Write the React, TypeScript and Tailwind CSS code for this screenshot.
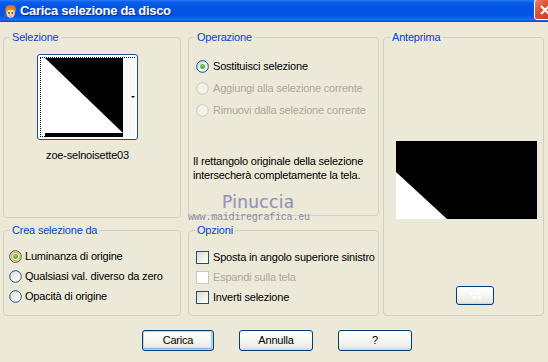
import React from "react";

function Radio({ checked = false, disabled = false, hover = false }: { checked?: boolean; disabled?: boolean; hover?: boolean }) {
  return (
    <svg width="13" height="13" viewBox="0 0 13 13" className="shrink-0">
      <defs>
        <linearGradient id="rgrad" x1="0" y1="0" x2="1" y2="1">
          <stop offset="0" stopColor="#D4D4CC" />
          <stop offset="0.6" stopColor="#F6F6F3" />
          <stop offset="1" stopColor="#FFFFFF" />
        </linearGradient>
        <radialGradient id="dgrad" cx="0.4" cy="0.35" r="0.7">
          <stop offset="0" stopColor="#7BE07B" />
          <stop offset="1" stopColor="#18A018" />
        </radialGradient>
      </defs>
      <circle
        cx="6.5"
        cy="6.5"
        r="5.8"
        fill={disabled ? "#F3F1E8" : "url(#rgrad)"}
        stroke={disabled ? "#CAC8BB" : "#1C5180"}
        strokeWidth="1"
      />
      {hover && <circle cx="6.5" cy="6.5" r="4.4" fill="none" stroke="#F6B23A" strokeWidth="1.6" />}
      {checked && <circle cx="6.5" cy="6.5" r="2.4" fill="url(#dgrad)" />}
    </svg>
  );
}

function Check({ disabled = false }: { disabled?: boolean }) {
  return (
    <svg width="13" height="13" viewBox="0 0 13 13" className="shrink-0">
      <defs>
        <linearGradient id="cgrad" x1="0" y1="0" x2="1" y2="1">
          <stop offset="0" stopColor="#D8D8D0" />
          <stop offset="0.6" stopColor="#F4F4F0" />
          <stop offset="1" stopColor="#FFFFFF" />
        </linearGradient>
      </defs>
      <rect
        x="0.5"
        y="0.5"
        width="12"
        height="12"
        fill={disabled ? "#FFFFFF" : "url(#cgrad)"}
        stroke={disabled ? "#CAC8BB" : "#1C5180"}
      />
    </svg>
  );
}

function Group({ title, className, children }: { title: string; className: string; children?: React.ReactNode }) {
  return (
    <fieldset className={`border border-[#D0D0BF] rounded-[4px] min-w-0 ${className}`}>
      <legend className="ml-[6px] px-[2px] text-[#0046D5] leading-[13px]">{title}</legend>
      {children}
    </fieldset>
  );
}

function XPButton({ children, def = false, className = "" }: { children?: React.ReactNode; def?: boolean; className?: string }) {
  return (
    <div
      className={`flex items-center justify-center rounded-[3px] border border-[#003C74] bg-[linear-gradient(to_bottom,#FFFFFF_0%,#F8F8F5_40%,#ECEBE6_85%,#D8D3C8_100%)] ${
        def ? "shadow-[inset_0_0_0_1px_#BCD4F6,inset_0_-2px_0_#89ADE4,inset_-1px_0_0_1px_#A7C3EE]" : ""
      } ${className}`}
    >
      {children}
    </div>
  );
}

function TitleIcon() {
  return (
    <svg width="16" height="16" viewBox="0 0 16 16" className="shrink-0">
      <path d="M3 5 Q4 1 9 1 Q14 1 14 6 L13 9 L11 6 L6 6 L4 9 Z" fill="#D9772B" />
      <ellipse cx="8.5" cy="9" rx="4.3" ry="4.8" fill="#F6D7B0" />
      <path d="M4 6 Q6 3 9 4 Q12 3 13 7 L12 7 Q10 5 8 6 Q6 5 5 8 Z" fill="#E5862F" />
      <circle cx="7" cy="9" r="0.9" fill="#2A6A2A" />
      <circle cx="10.3" cy="9" r="0.9" fill="#2A6A2A" />
      <path d="M7.5 11.8 Q8.6 12.6 9.7 11.8" stroke="#B0503A" strokeWidth="0.7" fill="none" />
      <path d="M2 8 L4 12 L3 14 Z" fill="#C0651E" />
    </svg>
  );
}

function Thumb() {
  return (
    <div className="w-[101px] h-[86px] rounded-[3px] border border-[#1F4E84] bg-white p-[2px]">
      <div className="w-full h-full border border-dotted border-black">
        <svg width="95" height="80" viewBox="0 0 95 80" className="block">
          <rect x="4" y="0" width="78" height="78" fill="#FFFFFF" />
          <polygon points="4,0 82,0 82,75" fill="#000000" />
          <rect x="4" y="75" width="78" height="4" fill="#000000" />
          <rect x="82" y="0" width="12" height="79" fill="#F7F7F7" />
          <polygon points="90,38 94,38 92,40" fill="#000000" />
        </svg>
      </div>
    </div>
  );
}

export default function App() {
  const dis = "text-[#ACA899]";
  return (
    <div className="relative w-[548px] h-[362px] overflow-hidden bg-[#ECE9D8] text-black text-[11px] leading-[13px] tracking-[-0.2px] whitespace-nowrap font-['Tahoma','Liberation_Sans',sans-serif]">
      {/* Title bar */}
      <div className="h-[22px] flex items-center bg-[linear-gradient(to_bottom,#2B7AF0_0%,#0A5CEB_10%,#0054E3_35%,#0053E2_70%,#0A62F2_82%,#1D6FF8_90%,#0043C9_100%)]">
        <div className="ml-[2px] mt-[1px]">
          <TitleIcon />
        </div>
        <div className="ml-[2px] text-white font-bold text-[13px] leading-[16px] font-['Trebuchet_MS','Liberation_Sans',sans-serif] [text-shadow:1px_1px_0_#0A2A8A] tracking-[-0.3px]">
          Carica selezione da disco
        </div>
        <div className="ml-auto mr-[-8px] self-start mt-[-1px] w-[22px] h-[21px] rounded-[3px] border border-white bg-[linear-gradient(135deg,#E8826A_0%,#D9512F_40%,#C43A1A_100%)] flex items-center justify-center">
          <svg width="12" height="12" viewBox="0 0 12 12">
            <path d="M2 2 L10 10 M10 2 L2 10" stroke="#FFFFFF" strokeWidth="2.2" />
          </svg>
        </div>
      </div>

      {/* Body */}
      <div className="flex pt-[9px] pl-[3px]">
        {/* left column */}
        <div className="w-[178px] flex flex-col gap-[6px]">
          <Group title="Selezione" className="h-[187px]">
            <div className="ml-[33px] mt-[10px] w-[101px] flex flex-col items-center">
              <Thumb />
              <div className="mt-[9px]">zoe-selnoisette03</div>
            </div>
          </Group>
          <Group title="Crea selezione da" className="h-[92px]">
            <div className="mt-[9px] pl-[5px] flex flex-col">
              <div className="h-[20px] flex items-center gap-[3px]">
                <Radio checked hover />
                <span>Luminanza di origine</span>
              </div>
              <div className="h-[20px] flex items-center gap-[3px]">
                <Radio />
                <span>Qualsiasi val. diverso da zero</span>
              </div>
              <div className="h-[20px] flex items-center gap-[3px]">
                <Radio />
                <span>Opacità di origine</span>
              </div>
            </div>
          </Group>
        </div>

        {/* middle column */}
        <div className="ml-[7px] w-[191px] flex flex-col gap-[8px]">
          <Group title="Operazione" className="h-[185px]">
            <div className="mt-[11px] pl-[7px] flex flex-col">
              <div className="h-[22px] flex items-center gap-[4px]">
                <Radio checked />
                <span>Sostituisci selezione</span>
              </div>
              <div className="h-[22px] flex items-center gap-[4px]">
                <Radio disabled />
                <span className={dis}>Aggiungi alla selezione corrente</span>
              </div>
              <div className="h-[22px] flex items-center gap-[4px]">
                <Radio disabled />
                <span className={dis}>Rimuovi dalla selezione corrente</span>
              </div>
            </div>
            <div className="mt-[33px] pl-[4px] leading-[14px]">
              Il rettangolo originale della selezione
              <br />
              intersecherà completamente la tela.
            </div>
          </Group>
          <Group title="Opzioni" className="h-[92px]">
            <div className="mt-[10px] pl-[7px] flex flex-col">
              <div className="h-[20px] flex items-center gap-[4px]">
                <Check />
                <span>Sposta in angolo superiore sinistro</span>
              </div>
              <div className="h-[20px] flex items-center gap-[4px]">
                <Check disabled />
                <span className={dis}>Espandi sulla tela</span>
              </div>
              <div className="h-[20px] flex items-center gap-[4px]">
                <Check />
                <span>Inverti selezione</span>
              </div>
            </div>
          </Group>
        </div>

        {/* right column */}
        <div className="ml-[4px] w-[161px]">
          <Group title="Anteprima" className="h-[285px]">
            <div className="ml-[12px] mt-[97px]">
              <svg width="141" height="78" viewBox="0 0 141 78" className="block">
                <rect x="0" y="0" width="141" height="78" fill="#000000" />
                <polygon points="0,31 51,78 0,78" fill="#FFFFFF" />
              </svg>
            </div>
            <div className="ml-[72px] mt-[67px]">
              <XPButton className="w-[38px] h-[19px]">
                <svg width="14" height="8" viewBox="0 0 14 8">
                  <rect x="2" y="0" width="3" height="3" fill="#FFFFFF" />
                  <rect x="8" y="0" width="3" height="3" fill="#FFFFFF" />
                  <rect x="5" y="4" width="3" height="3" fill="#FFFFFF" />
                  <rect x="10" y="4" width="3" height="3" fill="#FFFFFF" />
                </svg>
              </XPButton>
            </div>
          </Group>
        </div>
      </div>

      {/* Buttons */}
      <div className="mt-[14px] pl-[142px] flex gap-[25px]">
        <XPButton def className="w-[72px] h-[21px]">
          Carica
        </XPButton>
        <XPButton className="w-[74px] h-[21px]">Annulla</XPButton>
        <XPButton className="w-[74px] h-[21px]">?</XPButton>
      </div>

      {/* watermark overlay */}
      <div className="absolute left-[222px] top-[193px] text-[17px] leading-[18px] tracking-[0.3px] text-[#9494B8] font-['DejaVu_Sans',sans-serif] [text-shadow:0_0_1px_#C8C8DC]">
        Pinuccia
      </div>
      <div className="absolute left-[188px] top-[212px] text-[10px] leading-[11px] text-[#8C8CAA] font-['Liberation_Mono',monospace] tracking-[-0.2px]">
        www.maidiregrafica.eu
      </div>
    </div>
  );
}
